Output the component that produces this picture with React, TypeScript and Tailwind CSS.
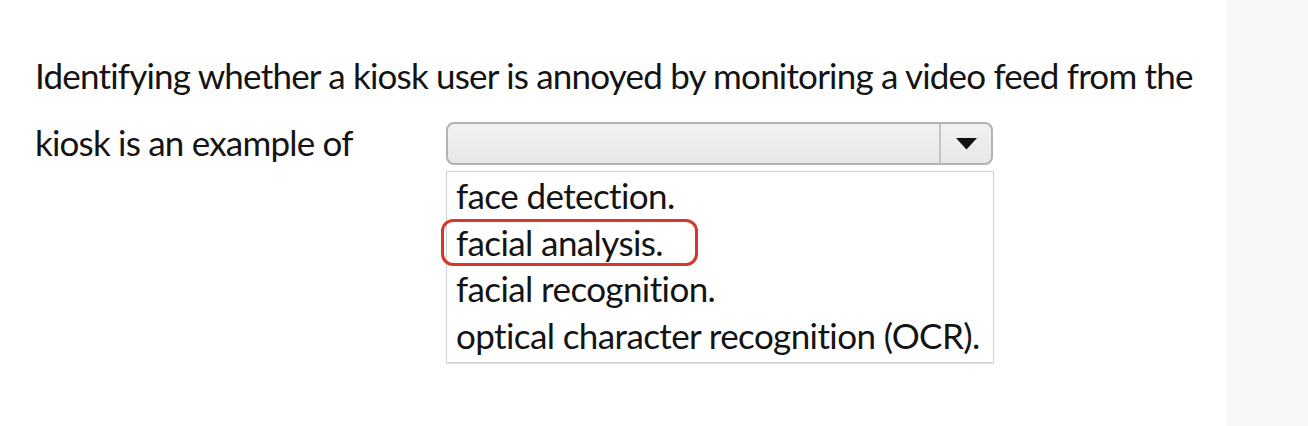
const options = [
  "face detection.",
  "facial analysis.",
  "facial recognition.",
  "optical character recognition (OCR).",
];

export default function App() {
  return (
    <div className="flex w-[1308px] h-[426px] bg-white text-[#141414] font-['Lato','Liberation_Sans',sans-serif] text-[35px] [font-feature-settings:'liga'_0]">
      <div className="w-[1226px] bg-white pl-[35px] pt-[53px]">
        <p className="leading-[44px] whitespace-nowrap tracking-[-0.8px]">
          Identifying whether a kiosk user is annoyed by monitoring a video feed from the
        </p>
        <div className="flex mt-[23px]">
          <p className="w-[411px] leading-[44px] whitespace-nowrap tracking-[-0.8px]">kiosk is an example of</p>
          <div className="flex flex-col">
            <div className="flex w-[547px] h-[43px] mt-[2px] rounded-[8px] border-2 border-[#b3b3b3] bg-gradient-to-b from-[#f1f1f1] to-[#e7e7e7]">
              <div className="flex-1" />
              <div className="w-[52px] flex items-center justify-center border-l-2 border-[#c4c4c4]">
                <svg width="23" height="13" viewBox="0 0 23 13">
                  <path d="M1 1h21L11.5 12.5z" fill="#111" />
                </svg>
              </div>
            </div>
            <ul className="relative mt-[6px] w-[548px] border border-[#d2d2d2] shadow-[0_1px_1px_rgba(0,0,0,0.12)] pt-0 pb-[3px] pl-[9px] tracking-[-0.6px]">
              {options.map((o, i) => (
                <li key={o} className="relative h-[46.7px] leading-[46.7px] whitespace-nowrap">
                  {i === 1 && (
                    <span className="absolute -left-[15px] top-0 w-[257px] h-[47px] rounded-[12px] border-[3px] border-[#d8372e]" />
                  )}
                  {o}
                </li>
              ))}
            </ul>
          </div>
        </div>
      </div>
      <div className="flex-1 bg-[#f7f8fa]" />
    </div>
  );
}
